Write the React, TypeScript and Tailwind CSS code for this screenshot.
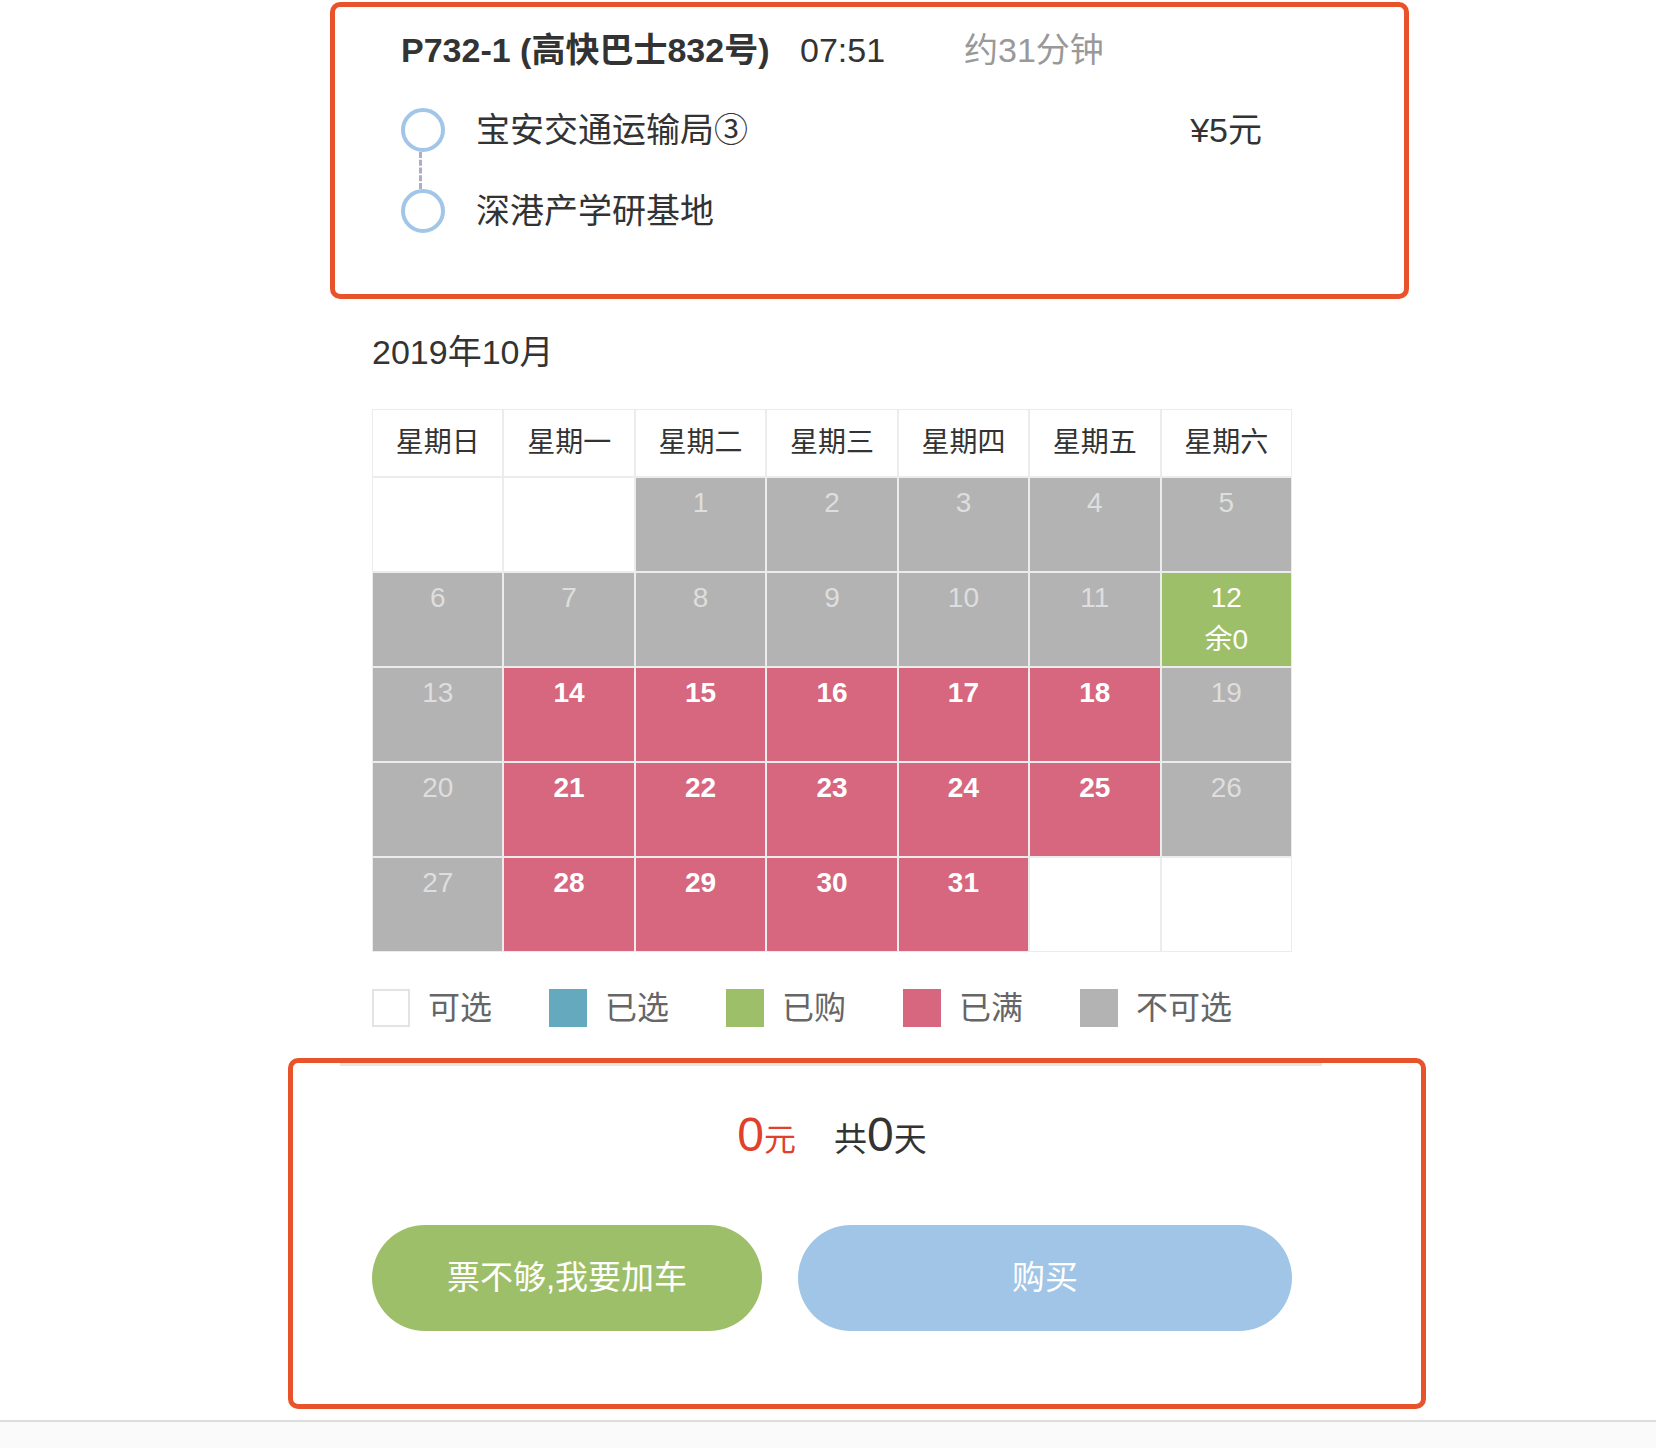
import React from "react";

type Kind = "empty" | "off" | "full" | "bought";
type Cell = { day?: number; kind: Kind; note?: string };

const weekdays = ["星期日", "星期一", "星期二", "星期三", "星期四", "星期五", "星期六"];

function buildCells(): Cell[] {
  const cells: Cell[] = [{ kind: "empty" }, { kind: "empty" }];
  for (let d = 1; d <= 31; d++) {
    const col = (d + 1) % 7;
    let kind: Kind = "off";
    if (d === 12) kind = "bought";
    else if (d >= 14 && col >= 1 && col <= 5) kind = "full";
    cells.push({ day: d, kind, note: d === 12 ? "余0" : undefined });
  }
  cells.push({ kind: "empty" }, { kind: "empty" });
  return cells;
}

const cellStyle: Record<Kind, string> = {
  empty: "bg-white",
  off: "bg-[#b3b3b3] text-[#dedede]",
  full: "bg-[#d6677f] text-white font-bold",
  bought: "bg-[#9ebf69] text-white",
};

const legend = [
  { label: "可选", box: "bg-white border-2 border-[#e3e3e3]" },
  { label: "已选", box: "bg-[#65a9be]" },
  { label: "已购", box: "bg-[#9ebf69]" },
  { label: "已满", box: "bg-[#d6677f]" },
  { label: "不可选", box: "bg-[#b3b3b3]" },
];

function StationDot() {
  return <div className="w-[44px] h-[44px] rounded-full border-[4px] border-[#a2c6e8] shrink-0" />;
}

export default function App() {
  const cells = buildCells();

  return (
    <div className="w-[1656px] h-[1448px] bg-white flex flex-col font-['Liberation_Sans','Noto_Sans_CJK_SC',sans-serif] text-[#333]">
      {/* Route card */}
      <div className="pt-[2px] pl-[330px]">
        <div className="w-[1079px] h-[297px] border-[5px] border-[#e9532b] rounded-[10px] pl-[66px] pt-[23px]">
          <div className="flex items-center h-[40px] text-[34px]">
            <span className="w-[399px] font-bold whitespace-nowrap">P732-1 (高快巴士832号)</span>
            <span className="w-[164px]">07:51</span>
            <span className="text-[#999]">约31分钟</span>
          </div>

          <div className="mt-[38px] flex items-center h-[44px]">
            <StationDot />
            <span className="ml-[31px] text-[34px] text-[#333]">宝安交通运输局③</span>
            <span className="ml-auto mr-[142px] text-[34px]">¥5元</span>
          </div>
          <div className="h-[37px] ml-[18px] w-0 border-l-[3px] border-dashed border-[#adadc8]" />
          <div className="flex items-center h-[44px]">
            <StationDot />
            <span className="ml-[31px] text-[34px] text-[#333]">深港产学研基地</span>
          </div>
        </div>
      </div>

      {/* Calendar */}
      <div className="pl-[372px]">
        <div className="mt-[33px] h-[40px] leading-[40px] text-[34px] text-[#333]">2019年10月</div>

        <div className="mt-[37px] w-[920px] grid grid-cols-7 gap-[2px] p-[1px] bg-[#ececec]">
          {weekdays.map((w) => (
            <div key={w} className="h-[66px] bg-white flex items-center justify-center text-[28px] text-[#333]">
              {w}
            </div>
          ))}
          {cells.map((c, i) => (
            <div
              key={i}
              className={`h-[93px] flex flex-col items-center pt-[4px] text-[28px] leading-[42px] ${cellStyle[c.kind]}`}
            >
              {c.day && <span>{c.day}</span>}
              {c.note && <span className="font-normal">{c.note}</span>}
            </div>
          ))}
        </div>

        <div className="mt-[37px] flex items-center gap-[57px] h-[38px]">
          {legend.map((l) => (
            <div key={l.label} className="flex items-center gap-[18px]">
              <div className={`w-[38px] h-[38px] ${l.box}`} />
              <span className="text-[32px] leading-[38px] text-[#666]">{l.label}</span>
            </div>
          ))}
        </div>
      </div>

      {/* Checkout */}
      <div className="pl-[288px] mt-[31px]">
        <div className="w-[1138px] h-[351px] border-[5px] border-[#e9532b] rounded-[10px]">
          <div className="ml-[47px] w-[982px] h-[3px] bg-[#e6e6e6]" />
          <div className="pl-[79px] w-[999px]">
            <div className="mt-[33px] h-[50px] flex items-baseline justify-center">
              <span className="text-[48px] text-[#e0412b]">0</span>
              <span className="text-[32px] text-[#e0412b]">元</span>
              <span className="ml-[38px] text-[33px] text-[#333]">共</span>
              <span className="text-[48px] text-[#333]">0</span>
              <span className="text-[33px] text-[#333]">天</span>
            </div>
            <div className="mt-[76px] flex gap-[36px]">
              <button className="w-[390px] h-[106px] rounded-full bg-[#9ebf69] text-white text-[33px]">
                票不够,我要加车
              </button>
              <button className="w-[494px] h-[106px] rounded-full bg-[#a0c5e6] text-white text-[33px]">
                购买
              </button>
            </div>
          </div>
        </div>
      </div>

      <div className="mt-[11px] h-[2px] w-full bg-[#dcdcdc]" />
      <div className="flex-1 bg-[#fafafa]" />
    </div>
  );
}
